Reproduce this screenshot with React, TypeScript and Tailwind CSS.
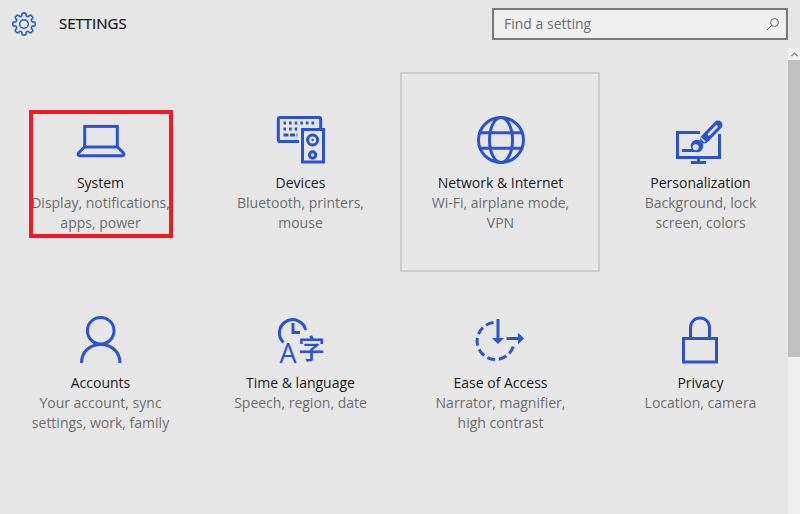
import type { ReactNode } from "react";

const BG = "#e6e6e6";
const BLUE = "#2b52d0";

const gearPath = (() => {
  const pts: string[] = [];
  for (let i = 0; i < 8; i++) {
    const a = (i * Math.PI) / 4 - Math.PI / 2;
    const step = Math.PI / 4;
    const at = (r: number, t: number) =>
      `${(12 + r * Math.cos(t)).toFixed(2)} ${(12 + r * Math.sin(t)).toFixed(2)}`;
    pts.push(`${i === 0 ? "M" : "L"}${at(8.3, a - step * 0.36)}`);
    pts.push(`L${at(11.2, a - step * 0.2)}`);
    pts.push(`L${at(11.2, a + step * 0.2)}`);
    pts.push(`L${at(8.3, a + step * 0.36)}`);
  }
  return pts.join(" ") + " Z";
})();

function Icon({ children }: { children: ReactNode }) {
  return (
    <svg width="48" height="48" viewBox="0 0 48 48" fill="none" stroke={BLUE} strokeWidth="3" className="block overflow-visible">
      {children}
    </svg>
  );
}

const tiles = [
  {
    title: "System",
    lines: ["Display, notifications,", "apps, power"],
    icon: (
      <Icon>
        <rect x="8.7" y="10.4" width="32.6" height="20.6" />
        <path d="M8.5 31 2.6 37q-1.4 2.5 .8 2.7h43.2q2.2-.2 .8-2.7L41.5 31" />
      </Icon>
    ),
  },
  {
    title: "Devices",
    lines: ["Bluetooth, printers,", "mouse"],
    icon: (
      <Icon>
        <path d="M23 25.5H4q-1.7 0-1.7-1.7V3.2q0-1.7 1.7-1.7h39q1.7 0 1.7 1.7v9" />
        <rect x="26.5" y="13.5" width="21" height="32.5" />
        <circle cx="36.6" cy="24" r="5" />
        <circle cx="36.6" cy="39" r="3.2" />
        <circle cx="36.6" cy="24" r="1.2" fill={BLUE} stroke="none" />
        <path strokeDasharray="2.6 3" d="M7.5 7h33" />
        <path strokeDasharray="2.6 3" d="M7.5 13h14" />
        <path strokeDasharray="5 1.5" d="M7.5 19h14" />
      </Icon>
    ),
  },
  {
    title: "Network & Internet",
    lines: ["Wi-Fi, airplane mode,", "VPN"],
    selected: true,
    icon: (
      <Icon>
        <circle cx="25" cy="24" r="22.5" />
        <ellipse cx="25" cy="24" rx="11.5" ry="22.5" />
        <path d="M3 16.7h44M3 32.3h44" />
      </Icon>
    ),
  },
  {
    title: "Personalization",
    lines: ["Background, lock", "screen, colors"],
    icon: (
      <Icon>
        <path d="M24 16.5H1.5v25h42V18" />
        <path d="M6 34.5h12M22.5 42v4M15 46.5h15" />
        <path strokeWidth="9" strokeLinecap="round" d="M42 9 28.5 23" />
        <path stroke={BG} strokeWidth="2.6" strokeLinecap="round" d="M40.5 10.5 33 18.3" />
        <path stroke={BG} strokeWidth="1.5" d="M24.5 21.5l4.5 4.5" />
        <circle cx="21" cy="30" r="6.3" fill={BLUE} stroke="none" />
        <circle cx="19.7" cy="31.3" r="3" fill={BG} stroke="none" />
      </Icon>
    ),
  },
  {
    title: "Accounts",
    lines: ["Your account, sync", "settings, work, family"],
    icon: (
      <Icon>
        <circle cx="24.7" cy="14.7" r="13.3" />
        <path d="M5.5 47c0-11 8-18.5 19.2-18.5S44 36 44 47" />
      </Icon>
    ),
  },
  {
    title: "Time & language",
    lines: ["Speech, region, date"],
    icon: (
      <Icon>
        <path d="M7.5 26.5A13.3 13.3 0 1 1 29.7 14" />
        <path d="M17 7v9.5h7" />
        <text x="3.5" y="47" fill={BLUE} stroke="none" fontSize="27" fontWeight="500" fontFamily="'Open Sans', sans-serif">A</text>
        <text x="22" y="43" fill={BLUE} stroke="none" fontSize="27" fontWeight="500" fontFamily="'Noto Sans CJK SC', sans-serif">字</text>
      </Icon>
    ),
  },
  {
    title: "Ease of Access",
    lines: ["Narrator, magnifier,", "high contrast"],
    icon: (
      <Icon>
        <path strokeDasharray="8 3.8" d="M17.5 6.6A18.5 18.5 0 1 0 38 27" />
        <path d="M22 3v21M30.5 22.5h13" />
        <path fill={BLUE} stroke="none" d="M16 22h12l-6 6zM42 16.8v11.4L48 22.5z" />
      </Icon>
    ),
  },
  {
    title: "Privacy",
    lines: ["Location, camera"],
    icon: (
      <Icon>
        <rect x="7.5" y="22.5" width="33" height="23.5" />
        <path d="M14.5 22V11.5a9.5 9.5 0 0 1 19 0V22" />
      </Icon>
    ),
  },
];

export default function App() {
  return (
    <div className="relative h-[514px] w-[800px] overflow-hidden bg-[#e6e6e6] font-['Open_Sans',sans-serif]">
      {/* header */}
      <div className="flex h-12 items-center">
        <svg width="24" height="24" viewBox="0 0 24 24" fill="none" stroke={BLUE} strokeWidth="1.5" className="ml-3 shrink-0">
          <path d={gearPath} strokeLinejoin="round" />
          <circle cx="12" cy="12" r="4.3" />
        </svg>
        <span className="ml-[23px] pb-0.5 text-[15px] font-medium text-[#111111] [-webkit-text-stroke:0.2px_#111111]">SETTINGS</span>
        <div className="ml-auto mr-3 flex h-8 w-[296px] items-center border-2 border-[#7a7a7a] bg-[#f0f0f0] pl-[10px] pr-[6px]">
          <span className="pb-0.5 text-[14px] text-[#6d6d6d]">Find a setting</span>
          <svg width="14" height="14" viewBox="0 0 14 14" fill="none" stroke="#6d6d6d" strokeWidth="1" className="ml-auto">
            <circle cx="8.5" cy="5.5" r="4" />
            <path d="M5.6 8.4 1 13" />
          </svg>
        </div>
      </div>

      {/* tiles */}
      <div className="grid grid-cols-[repeat(4,200px)] grid-rows-[repeat(2,200px)] pt-6">
        {tiles.map((t) => (
          <div
            key={t.title}
            className={`flex flex-col items-center ${t.selected ? "border-2 border-[#cccccc] pt-[42px]" : "pt-[44px]"}`}
          >
            {t.icon}
            <div className="mt-[9px] whitespace-nowrap pl-[1px] text-center text-[14px] leading-5 text-[#1a1a1a]">{t.title}</div>
            {t.lines.map((l) => (
              <div key={l} className="whitespace-nowrap pl-[1px] text-center text-[14px] leading-5 text-[#6d6d6d]">
                {l}
              </div>
            ))}
          </div>
        ))}
      </div>

      {/* red annotation */}
      <div className="absolute left-[29px] top-[110px] h-[128px] w-[144px] border-4 border-[#ed1c24]" />

      {/* scrollbar */}
      <div className="absolute bottom-0 right-0 top-12 flex w-3 flex-col bg-[#f0f0f0]">
        <div className="flex h-3 items-center justify-center">
          <svg width="7" height="5" viewBox="0 0 7 5" fill="none" stroke="#8a8a8a" strokeWidth="1.4">
            <path d="M.5 4 3.5 1l3 3" />
          </svg>
        </div>
        <div className="h-[297px] bg-[#c0c0c0]" />
      </div>
    </div>
  );
}
